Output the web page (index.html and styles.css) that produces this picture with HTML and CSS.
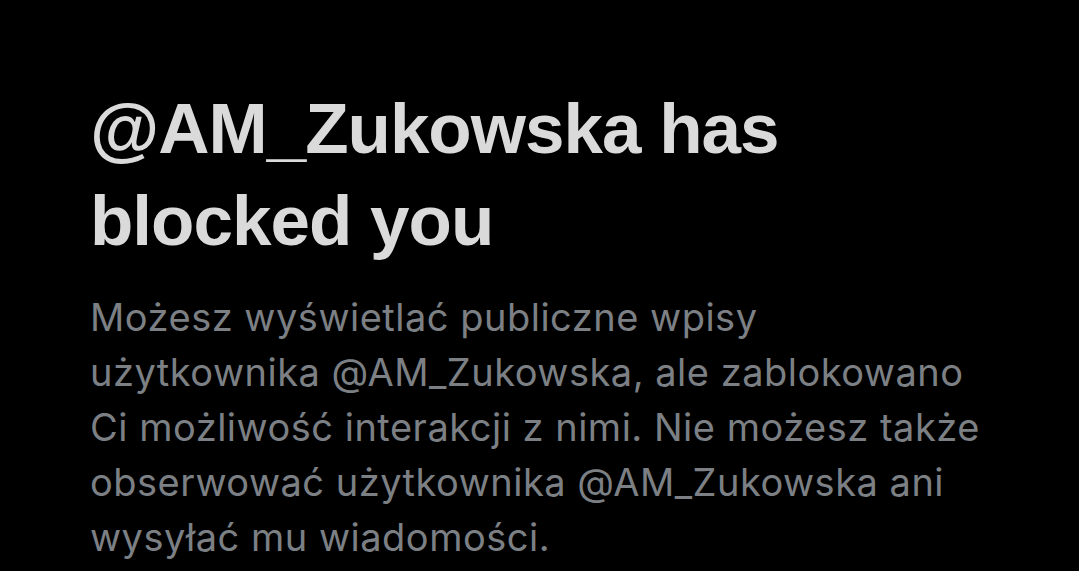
FILE: index.html
```html
<!DOCTYPE html>
<html lang="pl">
<head>
    <meta charset="UTF-8">
    <meta name="viewport" content="width=device-width, initial-scale=1.0">
    <title>Blocked</title>
    <link rel="stylesheet" href="styles.css">
</head>
<body>
    <div class="blocked">
        <h1 class="blocked-title">@AM_Zukowska has blocked you</h1>
        <p class="blocked-text">Możesz wyświetlać publiczne wpisy<br>użytkownika @AM_Zukowska, ale zablokowano<br>Ci możliwość interakcji z nimi. Nie możesz także<br>obserwować użytkownika @AM_Zukowska ani<br>wysyłać mu wiadomości.</p>
    </div>
</body>
</html>
```

FILE: styles.css
```css
html, body {
    margin: 0;
    height: 100%;
    background: #000;
}

body {
    overflow: hidden;
}

.blocked {
    padding: 83px 40px 0 90px;
}

.blocked-title {
    margin: 0;
    width: 720px;
    font-family: 'Liberation Sans', Arial, sans-serif;
    font-size: 71px;
    font-weight: bold;
    line-height: 92px;
    letter-spacing: -1px;
    color: #dadada;
}

.blocked-text {
    margin: 23px 0 0;
    font-family: Inter, 'Noto Sans', sans-serif;
    font-size: 38px;
    line-height: 55px;
    letter-spacing: 0.5px;
    white-space: nowrap;
    color: #7c8085;
}
```
